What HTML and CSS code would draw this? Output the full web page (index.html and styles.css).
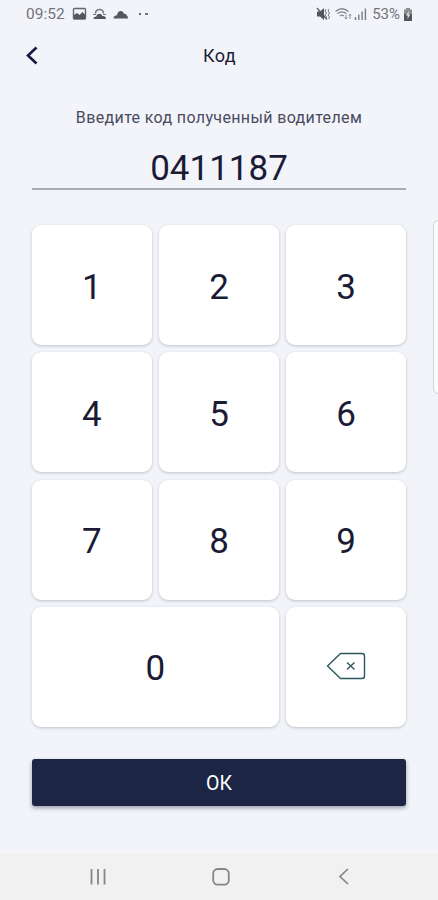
FILE: index.html
```html
<!DOCTYPE html>
<html lang="ru">

<head>
    <meta charset="UTF-8">
    <meta name="viewport" content="width=device-width, initial-scale=1.0">
    <link rel="stylesheet" href="styles.css">
    <title>Код</title>
</head>

<body>
    <div class="screen">
        <div class="status-bar">
            <span class="time">09:52</span>
            <svg class="status-left" width="80" height="14" viewBox="0 0 80 14">
                <!-- picture -->
                <rect x="1.500" y="1.500" width="12" height="10.500" rx="1" fill="none" stroke="#65676b" stroke-width="1.400" />
                <path d="M2 12V8l3-2 2.500 2 3-3L13 7.500V12z" fill="#54565a" />
                <!-- weather -->
                <path d="M23.500 6.500a4 4 0 0 1 8 0" fill="none" stroke="#75777b" stroke-width="1.600" />
                <path d="M21.500 12c0-2.300 2-2.200 2.700-2.200C24.700 6 29.500 6 30.300 9c2.700-.5 3.700 1 3.700 3z" fill="#54565a" />
                <path d="M21 7.500h3M31 7.500h3" stroke="#75777b" />
                <!-- cloud -->
                <path d="M41.500 11.500c0-2.500 2-3.200 3.500-3.200C45.500 3 51 2.800 52 6.800c2 0 2.700 1 2.700 1.600 1 .2 1.300 2 1.200 3.100z" fill="#54565a" />
                <!-- more notifications -->
                <rect x="67" y="6" width="2" height="2" fill="#65676b" />
                <rect x="73" y="6" width="3" height="2" fill="#75777b" />
            </svg>
            <svg class="status-right" width="54" height="14" viewBox="0 0 54 14">
                <!-- vibrate -->
                <path d="M1 4.500h3L8 1v12L4 9.500H1z" fill="#54565a" />
                <path d="M1 1l10 11.500" stroke="#54565a" stroke-width="1.2" />
                <path d="M10 2l-1 2 1.500 2L9 8l1.500 2-1 2M13 2l-1 2 1.500 2L12 8l1.500 2-1 2" fill="none" stroke="#707276" />
                <!-- wifi -->
                <path d="M19.500 4.500Q26-1 32.500 4.500M21.500 6.700Q26 3 30.500 6.700M24 9q2-1.800 4 0" fill="none" stroke="#85878b" stroke-width="1.3" />
                <path d="M30 8v4m-1.500-1.500L30 12l1.500-1.500M34 12V7m-1.300 1.500L34 7l1.300 1.500" fill="none" stroke="#85878b" stroke-width=".9" />
                <!-- signal -->
                <path d="M39.500 10v3M42.800 7.500V13M46.100 4.500V13M49.400 1.500V13" stroke="#7a7c80" stroke-width="1.4" />
            </svg>
            <span class="battery-text">53%</span>
            <svg class="battery" width="10" height="13" viewBox="0 0 10 13">
                <path d="M3 0h4v1.500h2V13H1V1.500h2z" fill="#8b8d91" />
                <path d="M1 6h8v7H1z" fill="#54565a" />
                <path d="M6 3L3 7.500h1.800L4.500 11 7.300 6.500H5.500z" fill="#e8eaef" />
            </svg>
        </div>

        <header class="header">
            <svg class="back" width="13" height="20" viewBox="0 0 13 20">
                <path d="M11.500 1.500L3 9.500l8.500 8" fill="none" stroke="#17173f" stroke-width="2.600" />
            </svg>
            <h1>Код</h1>
        </header>

        <main class="content">
            <p class="prompt">Введите код полученный водителем</p>
            <div class="code">0411187</div>

            <div class="keypad">
                <button class="key">1</button>
                <button class="key">2</button>
                <button class="key">3</button>
                <button class="key">4</button>
                <button class="key">5</button>
                <button class="key">6</button>
                <button class="key">7</button>
                <button class="key">8</button>
                <button class="key">9</button>
                <button class="key key-zero">0</button>
                <button class="key" aria-label="Удалить">
                    <svg class="delete" width="40" height="28" viewBox="0 0 40 28">
                        <path d="M1.500 14L14.500 1.500H36Q38.500 1.500 38.500 4V24Q38.500 26.500 36 26.500H14.500Z" fill="none" stroke="#2b5661" stroke-width="1.400" stroke-linejoin="round" />
                        <path d="M21 10.500l7.500 7M28.500 10.500l-7.500 7" stroke="#3c5a63" stroke-width="1.500" />
                    </svg>
                </button>
            </div>

            <button class="ok">ОК</button>
        </main>

        <nav class="nav-bar">
            <svg width="18" height="18" viewBox="0 0 18 18">
                <path d="M2.500 1v15.500M9 1v15.500M15.500 1v15.500" stroke="#858585" stroke-width="1.800" />
            </svg>
            <svg width="18" height="18" viewBox="0 0 18 18">
                <rect x="1.200" y="1" width="15.600" height="15.600" rx="4.500" fill="none" stroke="#858585" stroke-width="1.800" />
            </svg>
            <svg width="18" height="18" viewBox="0 0 18 18">
                <path d="M13 1L5 8.500l8 7.500" fill="none" stroke="#858585" stroke-width="1.700" />
            </svg>
        </nav>

        <div class="edge-handle"></div>
    </div>
</body>

</html>
```
FILE: styles.css
```css
* {
    box-sizing: border-box;
}

body {
    margin: 0;
    background-color: #f2f4f9;
    color: #1b1b36;
    font-family: Roboto, sans-serif;
}

button {
    border: none;
    padding: 0;
    font-family: inherit;
    cursor: pointer;
}

.screen {
    position: relative;
    display: flex;
    flex-direction: column;
    height: 900px;
    overflow: hidden;
}

.status-bar {
    display: flex;
    align-items: center;
    height: 28px;
    padding: 0 25px 0 26px;
    color: #737579;
    font-size: 15.5px;
}

.status-left {
    margin-left: 7px;
}

.status-right {
    margin-left: auto;
}

.battery-text {
    margin: 0 3px 0 2px;
    font-size: 15px;
}

.header {
    display: grid;
    grid-template-columns: 1fr auto 1fr;
    align-items: center;
    height: 55px;
    padding: 0 24px 0 25px;
}

h1 {
    margin: 0;
    font-size: 18px;
    font-weight: 400;
    letter-spacing: 0.4px;
}

.content {
    flex: 1;
    padding: 0 32px;
}

.prompt {
    margin: 25px 0 0;
    font-size: 16px;
    line-height: 20px;
    letter-spacing: 0.36px;
    text-align: center;
    white-space: nowrap;
    color: #4a4b60;
}

.code {
    height: 62px;
    padding-top: 20px;
    border-bottom: 2px solid #a9abb0;
    font-size: 35px;
    line-height: 41px;
    text-align: center;
}

.keypad {
    display: grid;
    grid-template-columns: repeat(3, 1fr);
    grid-auto-rows: 120px;
    gap: 7.3px;
    margin-top: 35px;
}

.key {
    display: flex;
    align-items: center;
    justify-content: center;
    padding-top: 4px;
    border-radius: 9px;
    background-color: #fff;
    box-shadow: 0 1px 3px rgba(40, 45, 60, 0.26);
    color: #1b1b36;
    font-size: 35px;
}

.key-zero {
    grid-column: span 2;
}

.delete {
    margin-top: -5px;
}

.ok {
    display: block;
    width: 100%;
    height: 47px;
    margin-top: 32px;
    padding-top: 2px;
    border-radius: 3px;
    background-color: #1c2544;
    box-shadow: 0 2px 4px rgba(20, 25, 45, 0.4);
    color: #fff;
    font-size: 19.5px;
}

.nav-bar {
    display: flex;
    align-items: center;
    justify-content: space-between;
    height: 46px;
    padding: 0 85px 0 89px;
    background-color: #f1f1f1;
}

/* edge panel tab over the right side of the screen */
.edge-handle {
    position: absolute;
    top: 220px;
    right: -6px;
    width: 11px;
    height: 174px;
    border: 1px solid #d3d5db;
    border-radius: 6px;
    background-color: #fafbfd;
}
```
